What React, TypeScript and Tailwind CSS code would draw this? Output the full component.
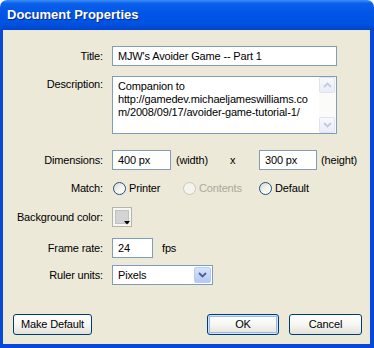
import React from 'react'

const Label = ({ children, top = false }: { children: React.ReactNode; top?: boolean }) => (
  <div className={`w-[100px] shrink-0 text-right leading-[14px] ${top ? 'pt-[1px]' : ''}`}>{children}</div>
)

const Radio = ({ label, disabled = false }: { label: string; disabled?: boolean }) => (
  <div className="flex items-center gap-[3px]">
    <span
      className={`w-[13px] h-[13px] rounded-full border ${
        disabled
          ? 'border-[#CAC8BB] bg-[#F4F3EE]'
          : 'border-[#1C5180] bg-linear-to-br from-[#DCD8CD] via-[#F4F3EE] to-white'
      }`}
    />
    <span className={disabled ? 'text-[#ACA899]' : 'text-black'}>{label}</span>
  </div>
)

const TextBox = ({ value, className }: { value: string; className: string }) => (
  <div className={`h-[20px] border border-[#7F9DB9] bg-white pl-[5px] flex items-center leading-[14px] ${className}`}>
    {value}
  </div>
)

const Chevron = ({ up = false, color }: { up?: boolean; color: string }) => (
  <svg width="9" height="6" viewBox="0 0 9 6">
    <path d={up ? 'M1 5 L4.5 1.5 L8 5' : 'M1 1 L4.5 4.5 L8 1'} fill="none" stroke={color} strokeWidth="1.8" />
  </svg>
)

const ScrollButton = ({ up = false }: { up?: boolean }) => (
  <div className="w-[16px] h-[16px] rounded-[2px] border border-[#DCE3F0] bg-linear-to-b from-[#F7F9FD] to-[#E8EDF8] flex items-center justify-center">
    <Chevron up={up} color="#C3CBDB" />
  </div>
)

const XPButton = ({ children, className, isDefault = false }: { children: React.ReactNode; className: string; isDefault?: boolean }) => (
  <button
    className={`h-[21px] rounded-[3px] border border-[#003C74] bg-linear-to-b from-white via-[#F6F6F3] to-[#E3E2DA] text-[11px] text-black ${
      isDefault ? 'shadow-[inset_0_0_0_1px_#CEE7FF,inset_0_0_0_2px_#98B8EA]' : ''
    } ${className}`}
  >
    {children}
  </button>
)

export default function App() {
  return (
    <div className="w-[374px] h-[348px] flex flex-col font-['Liberation_Sans',Arial,sans-serif] text-[11px] tracking-[-0.15px] text-black">
      {/* barre de titre */}
      <div className="h-[30px] shrink-0 rounded-t-[7px] bg-[linear-gradient(to_bottom,#3D8EF6_0%,#0A5FEA_12%,#0055E5_45%,#0053E1_80%,#0044CC_100%)] flex items-center pl-[7px] pb-[1px]">
        <span className="text-[13px] font-bold tracking-normal text-white [text-shadow:1px_1px_0_#0A2A8C]">Document Properties</span>
      </div>

      <div className="flex-1 flex flex-col bg-[#ECE9D8] border-l-[3px] border-r-[4px] border-b-[4px] border-[#0848D8] pt-[16px]">
        <div className="flex items-center">
          <Label>Title:</Label>
          <TextBox value="MJW's Avoider Game -- Part 1" className="ml-[9px] w-[225px]" />
        </div>

        <div className="flex items-start mt-[10px]">
          <Label top>Description:</Label>
          <div className="ml-[9px] w-[225px] h-[58px] border border-[#7F9DB9] bg-white flex">
            <div className="flex-1 pl-[5px] pt-[3px] leading-[13px] whitespace-nowrap overflow-hidden">
              <div>Companion to</div>
              <div>http://gamedev.michaeljameswilliams.co</div>
              <div>m/2008/09/17/avoider-game-tutorial-1/</div>
            </div>
            <div className="w-[17px] bg-[#FBFBF9] flex flex-col justify-between">
              <ScrollButton up />
              <ScrollButton />
            </div>
          </div>
        </div>

        <div className="flex items-center mt-[16px]">
          <Label>Dimensions:</Label>
          <TextBox value="400 px" className="ml-[9px] w-[59px]" />
          <span className="ml-[5px] w-[49px]">(width)</span>
          <span className="ml-[5px] w-[29px]">x</span>
          <TextBox value="300 px" className="w-[58px]" />
          <span className="ml-[4px]">(height)</span>
        </div>

        <div className="flex items-center mt-[9px] h-[18px]">
          <Label>Match:</Label>
          <div className="ml-[10px] w-[70px]">
            <Radio label="Printer" />
          </div>
          <div className="w-[76px]">
            <Radio label="Contents" disabled />
          </div>
          <Radio label="Default" />
        </div>

        <div className="flex items-center mt-[10px]">
          <Label>Background color:</Label>
          <div className="ml-[9px] relative w-[20px] h-[20px] border border-[#B5B4AC] bg-[#F7F6F1] p-[2px]">
            <div className="w-full h-full bg-[#D4D4D4] border border-[#C2C2C2]" />
            <svg className="absolute right-[1px] bottom-[1px]" width="6" height="4" viewBox="0 0 6 4">
              <path d="M0 0 L6 0 L3 3.5 Z" fill="#000" />
            </svg>
          </div>
        </div>

        <div className="flex items-center mt-[11px]">
          <Label>Frame rate:</Label>
          <TextBox value="24" className="ml-[9px] w-[41px]" />
          <span className="ml-[9px]">fps</span>
        </div>

        <div className="flex items-center mt-[7px]">
          <Label>Ruler units:</Label>
          <div className="ml-[9px] w-[101px] h-[20px] border border-[#7F9DB9] bg-white flex items-center pl-[5px] pr-[1px]">
            <span className="flex-1">Pixels</span>
            <div className="w-[17px] h-[16px] rounded-[2px] border border-[#B9CDF9] bg-linear-to-b from-[#D6E3FD] to-[#B4C8F6] flex items-center justify-center">
              <Chevron color="#4D6185" />
            </div>
          </div>
        </div>

        <div className="flex-1" />

        <div className="flex items-center pb-[9px]">
          <XPButton className="ml-[10px] w-[79px]">Make Default</XPButton>
          <XPButton className="ml-[115px] w-[72px]" isDefault>
            OK
          </XPButton>
          <XPButton className="ml-[10px] w-[73px]">Cancel</XPButton>
        </div>
      </div>
    </div>
  )
}
